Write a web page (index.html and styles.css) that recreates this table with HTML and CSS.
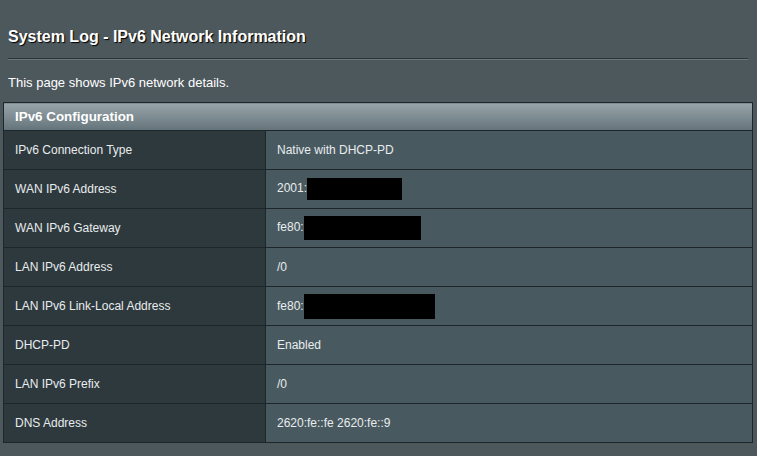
FILE: index.html
```html
<!DOCTYPE html>
<html>
<head>
<meta charset="utf-8">
<link rel="stylesheet" href="styles.css">
</head>
<body>
<div class="page">
  <h1 class="title">System Log - IPv6 Network Information</h1>
  <div class="divider"></div>
  <p class="desc">This page shows IPv6 network details.</p>
  <table class="info">
    <thead>
      <tr><th colspan="2">IPv6 Configuration</th></tr>
    </thead>
    <tbody>
      <tr><td class="k">IPv6 Connection Type</td><td class="v">Native with DHCP-PD</td></tr>
      <tr><td class="k">WAN IPv6 Address</td><td class="v">2001:<span class="redact r1"></span></td></tr>
      <tr><td class="k">WAN IPv6 Gateway</td><td class="v">fe80:<span class="redact r2"></span></td></tr>
      <tr><td class="k">LAN IPv6 Address</td><td class="v">/0</td></tr>
      <tr><td class="k">LAN IPv6 Link-Local Address</td><td class="v">fe80:<span class="redact r3"></span></td></tr>
      <tr><td class="k">DHCP-PD</td><td class="v">Enabled</td></tr>
      <tr><td class="k">LAN IPv6 Prefix</td><td class="v">/0</td></tr>
      <tr><td class="k">DNS Address</td><td class="v">2620:fe::fe 2620:fe::9</td></tr>
    </tbody>
  </table>
</div>
</body>
</html>
```

FILE: styles.css
```css
html, body {
  margin: 0;
  padding: 0;
  background: #4d585d;
  font-family: "Liberation Sans", Arial, sans-serif;
  color: #ffffff;
}
.page {
  padding: 27px 4px 0 3px;
}
.title {
  margin: 0 0 0 5px;
  font-size: 16px;
  font-weight: bold;
  line-height: 19px;
  color: #ffffff;
  text-shadow: 1px 1px 1px #000000;
}
.divider {
  margin: 12px 5px 0 5px;
  height: 1px;
  background: #2b3538;
  border-bottom: 1px solid #6a777c;
}
.desc {
  margin: 15px 0 0 5px;
  font-size: 13px;
  line-height: 15px;
  color: #ffffff;
}
.info {
  margin-top: 12px;
  width: 750px;
  border-collapse: collapse;
  border: 1px solid #1d2629;
  font-size: 12px;
}
.info th {
  height: 27px;
  padding: 0 0 0 11px;
  text-align: left;
  font-size: 13.4px;
  font-weight: bold;
  color: #ffffff;
  background: linear-gradient(#98a6ab, #64727a);
  border-bottom: 1px solid #1d2629;
}
.info td {
  height: 38px;
  padding: 0 0 0 11px;
  border-bottom: 1px solid #1d2629;
  vertical-align: middle;
  white-space: nowrap;
}
.info td.k {
  width: 250px;
  background: #2e393d;
  color: #e8ecee;
  border-right: 1px solid #1d2629;
}
.info td.v {
  background: #485a60;
  color: #e8ecee;
}
.redact {
  display: inline-block;
  background: #000000;
  vertical-align: middle;
}
.r1 { width: 95px; height: 22px; margin-left: 0; }
.r2 { width: 117px; height: 24px; margin-left: 0; }
.r3 { width: 131px; height: 25px; margin-left: 0; }
```
